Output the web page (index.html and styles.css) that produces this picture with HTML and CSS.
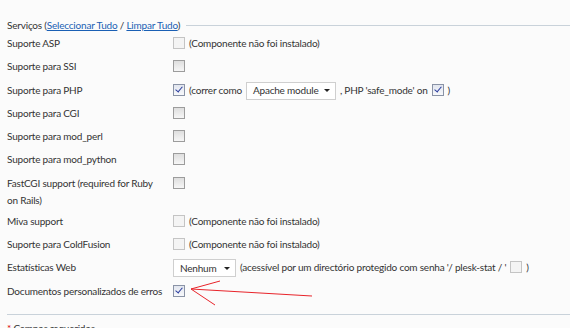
FILE: index.html
```html
<!DOCTYPE html>
<html lang="pt">
<head>
    <meta charset="UTF-8">
    <title>Serviços</title>
    <link rel="stylesheet" href="styles.css">
</head>
<body>
    <div class="services">
        <div class="legend">
            <span>Serviços (<a href="#">Seleccionar Tudo</a> / <a href="#">Limpar Tudo</a>)</span>
            <div class="rule"></div>
        </div>
        <div class="form-grid">
            <div class="label">Suporte ASP</div>
            <div class="field"><span class="cb off"></span> (Componente não foi instalado)</div>

            <div class="label">Suporte para SSI</div>
            <div class="field"><span class="cb"></span></div>

            <div class="label">Suporte para PHP</div>
            <div class="field">
                <span class="cb checked"></span> (correr como
                <span class="select wide">Apache module <span class="caret"></span></span>
                , PHP 'safe_mode' on <span class="cb checked"></span> )
            </div>

            <div class="label">Suporte para CGI</div>
            <div class="field"><span class="cb"></span></div>

            <div class="label">Suporte para mod_perl</div>
            <div class="field"><span class="cb"></span></div>

            <div class="label">Suporte para mod_python</div>
            <div class="field"><span class="cb"></span></div>

            <div class="label">FastCGI support (required for Ruby on Rails)</div>
            <div class="field"><span class="cb"></span></div>

            <div class="label">Miva support</div>
            <div class="field"><span class="cb off"></span> (Componente não foi instalado)</div>

            <div class="label">Suporte para ColdFusion</div>
            <div class="field"><span class="cb off"></span> (Componente não foi instalado)</div>

            <div class="label">Estatísticas Web</div>
            <div class="field">
                <span class="select">Nenhum <span class="caret"></span></span>
                (acessível por um directório protegido com senha '/ plesk-stat / ' <span class="cb off"></span> )
            </div>

            <div class="label">Documentos personalizados de erros</div>
            <div class="field"><span class="cb checked"></span></div>
        </div>
        <div class="required"><span class="star">*</span> Campos requeridos</div>
    </div>

    <!-- red annotation arrow -->
    <svg class="arrow" width="570" height="328" viewBox="0 0 570 328">
        <path d="M312 296 L191 289 M220 281 L191 289 L215 305" fill="none" stroke="#e8242a" stroke-width="1"/>
    </svg>
</body>
</html>
```

FILE: styles.css
```css
body {
    margin: 0;
    background: #fbfbfb;
    color: #333;
    font-family: Lato, "Open Sans", sans-serif;
    font-size: 10px;
    letter-spacing: -0.2px;
    position: relative;
    height: 328px;
    overflow: hidden;
}

a {
    color: #1a5fb4;
}

.services {
    padding: 18px 0 0 7px;
}

.legend {
    display: flex;
    align-items: center;
    gap: 6px;
    height: 14px;
}

.legend .rule {
    flex: 1;
    border-top: 1px solid #c9d2da;
}

.form-grid {
    display: grid;
    grid-template-columns: 166px 1fr;
    grid-auto-rows: minmax(23.3px, auto);
    margin-top: 3px;
    padding-bottom: 8px;
    border-bottom: 1px solid #c9d2da;
}

.label {
    line-height: 17px;
    padding-right: 8px;
    padding-bottom: 4px;
}

.field {
    display: flex;
    align-items: flex-start;
    gap: 4px;
    line-height: 17px;
    white-space: nowrap;
}

.cb {
    display: inline-block;
    width: 10px;
    height: 10px;
    margin-top: 2px;
    border: 1px solid #9c9c9c;
    background: linear-gradient(#dedede, #f6f6f6);
    position: relative;
    flex: none;
}

.cb.off {
    border-color: #c4c4c4;
    background: #f4f4f4;
}

.cb.checked {
    border-color: #8a93a6;
    background: linear-gradient(#e2e6ef, #f7f8fb);
}

.cb.checked::after {
    content: "";
    position: absolute;
    left: 3px;
    top: 0px;
    width: 3px;
    height: 6px;
    border: solid #2a3c9e;
    border-width: 0 1.5px 1.5px 0;
    transform: rotate(40deg);
}

.select {
    display: inline-flex;
    align-items: center;
    justify-content: space-between;
    height: 16px;
    width: 50px;
    padding: 0 5px 0 6px;
    border: 1px solid #cfcfcf;
    background: #fff;
}

.select.wide {
    width: 77px;
}

.caret {
    width: 0;
    height: 0;
    border-left: 3px solid transparent;
    border-right: 3px solid transparent;
    border-top: 3px solid #222;
}

.required {
    margin-top: 7px;
}

.star {
    color: #d00;
}

.arrow {
    position: absolute;
    left: 0;
    top: 0;
    pointer-events: none;
}
```
